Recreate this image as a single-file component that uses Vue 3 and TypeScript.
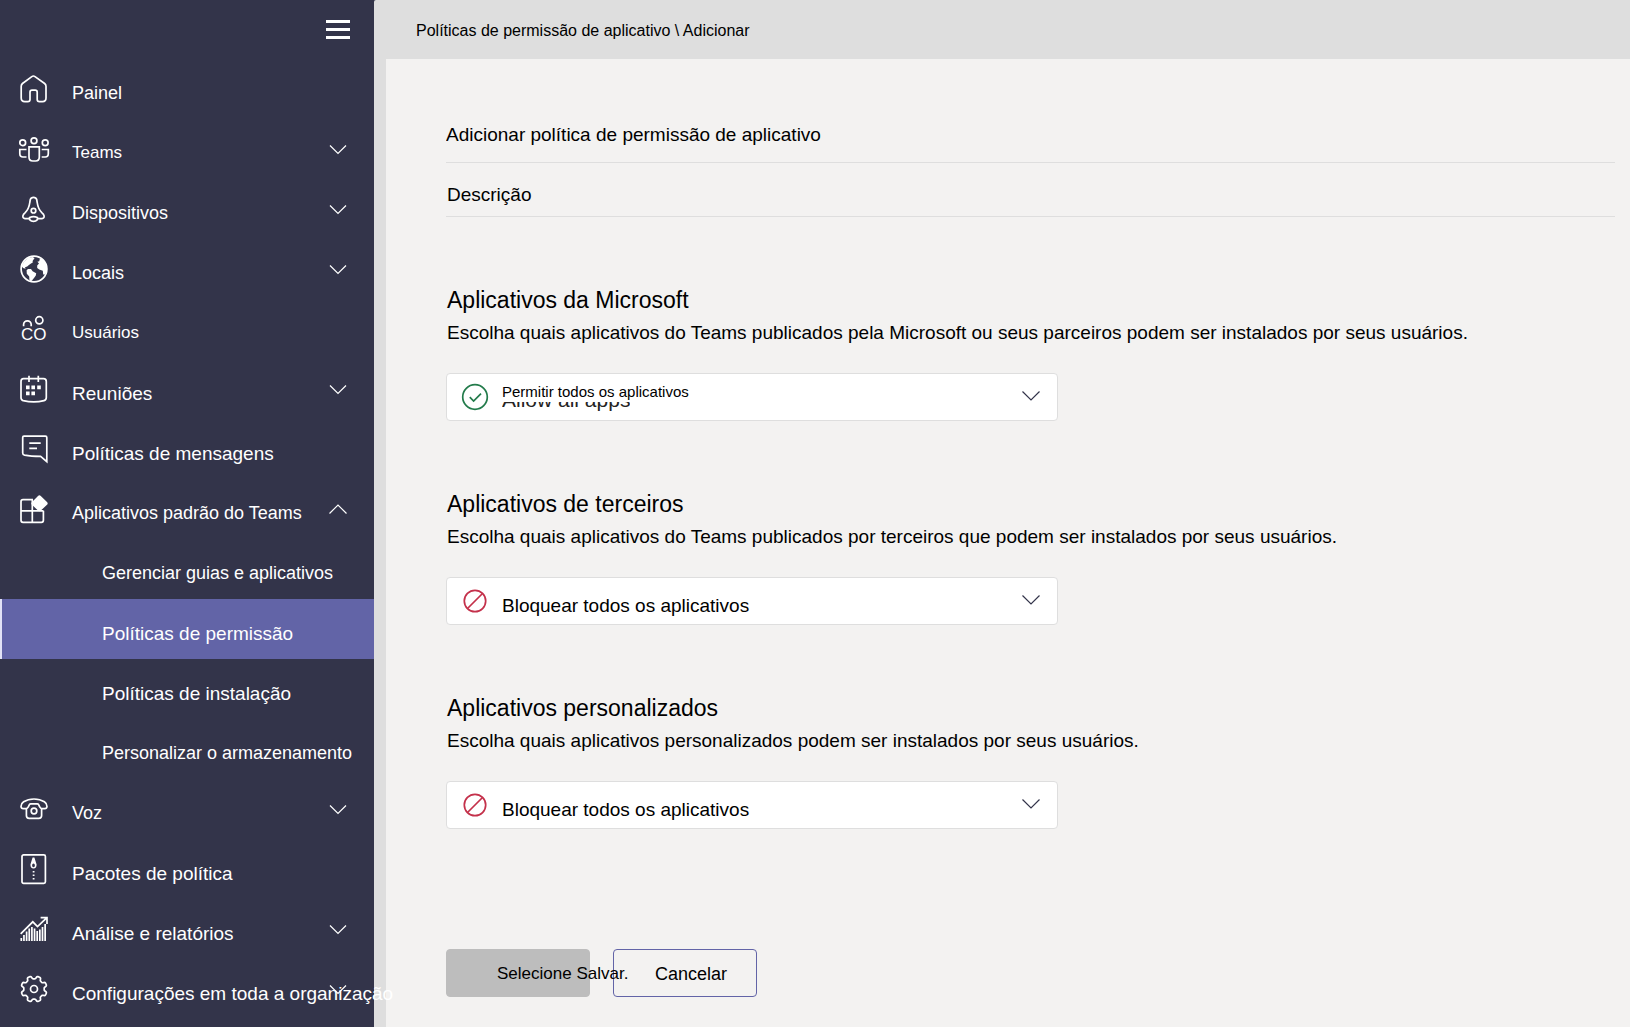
<script setup lang="ts">
import { ref } from 'vue'

interface NavItem {
  label: string
  icon?: string
  size: 's17' | 's18' | 's19'
  toggle?: 'down' | 'up'
  active?: boolean
}

interface Section {
  id: string
  title: string
  text: string
  value: string
  state: 'allow' | 'block'
}

const items: NavItem[] = [
  { label: 'Painel', icon: 'home', size: 's18' },
  { label: 'Teams', icon: 'teams', size: 's17', toggle: 'down' },
  { label: 'Dispositivos', icon: 'devices', size: 's18', toggle: 'down' },
  { label: 'Locais', icon: 'globe', size: 's18', toggle: 'down' },
  { label: 'Usuários', icon: 'users', size: 's17' },
  { label: 'Reuniões', icon: 'calendar', size: 's19', toggle: 'down' },
  { label: 'Políticas de mensagens', icon: 'message', size: 's19' },
  { label: 'Aplicativos padrão do Teams', icon: 'apps', size: 's18', toggle: 'up' },
  { label: 'Gerenciar guias e aplicativos', size: 's18' },
  { label: 'Políticas de permissão', size: 's19', active: true },
  { label: 'Políticas de instalação', size: 's19' },
  { label: 'Personalizar o armazenamento', size: 's18' },
  { label: 'Voz', icon: 'phone', size: 's18', toggle: 'down' },
  { label: 'Pacotes de política', icon: 'package', size: 's19' },
  { label: 'Análise e relatórios', icon: 'chart', size: 's19', toggle: 'down' },
  { label: 'Configurações em toda a organização', icon: 'gear', size: 's19', toggle: 'down' },
]

const sections = ref<Section[]>([
  {
    id: 'microsoft',
    title: 'Aplicativos da Microsoft',
    text: 'Escolha quais aplicativos do Teams publicados pela Microsoft ou seus parceiros podem ser instalados por seus usuários.',
    value: 'Permitir todos os aplicativos',
    state: 'allow',
  },
  {
    id: 'terceiros',
    title: 'Aplicativos de terceiros',
    text: 'Escolha quais aplicativos do Teams publicados por terceiros que podem ser instalados por seus usuários.',
    value: 'Bloquear todos os aplicativos',
    state: 'block',
  },
  {
    id: 'personalizados',
    title: 'Aplicativos personalizados',
    text: 'Escolha quais aplicativos personalizados podem ser instalados por seus usuários.',
    value: 'Bloquear todos os aplicativos',
    state: 'block',
  },
])

const name = ref('')
const description = ref('')

// Eight rounded teeth around the centre of a 32px box.
const gearPath = (() => {
  const pts: string[] = []
  for (let i = 0; i < 160; i++) {
    const a = (i / 160) * Math.PI * 2
    const r = 11.6 + 1.4 * Math.tanh(2.6 * Math.cos(8 * a - Math.PI))
    pts.push(`${(16 + r * Math.cos(a)).toFixed(2)} ${(16 + r * Math.sin(a)).toFixed(2)}`)
  }
  return `M${pts.join('L')}Z`
})()

const barTops = [25, 22, 18.5, 15.5, 14, 15.5, 18, 16.5, 14, 11]
const barsPath = barTops.map((top, i) => `M${3.3 + i * 2.65} 28V${top}`).join('')
</script>

<template>
  <div class="page">
    <aside class="sidebar">
      <div class="menu-bar">
        <button class="menu-button" type="button" aria-label="Menu">
          <span></span><span></span><span></span>
        </button>
      </div>
      <nav>
        <a
          v-for="item in items"
          :key="item.label"
          href="#"
          class="nav-row"
          :class="{ sub: !item.icon, active: item.active }"
        >
          <svg v-if="item.icon" class="nav-icon" viewBox="0 0 32 32" aria-hidden="true">
            <path
              v-if="item.icon === 'home'"
              d="M3.2 13.2Q3.2 11.6 4.5 10.5L13.8 3.6Q15.4 2.4 17 3.6L26.6 10.5Q28 11.6 28 13.2V25Q28 28.6 24.5 28.6H21.5Q19.2 28.6 19.2 26.5V19.2Q19.2 17.2 17.2 17.2H14Q12 17.2 12 19.2V26.5Q12 28.6 9.8 28.6H6.8Q3.2 28.6 3.2 25Z"
            />
            <g v-else-if="item.icon === 'teams'">
              <circle cx="4.7" cy="9.7" r="2.9" />
              <circle cx="16" cy="7.7" r="2.9" />
              <circle cx="27.2" cy="9.7" r="2.9" />
              <path d="M11 13.8H21.3V24Q21.3 28 17.5 28H14.8Q11 28 11 24Z" />
              <path d="M8.5 16.5H1.8V20.5Q1.8 24 5 24H8.5M23.7 16.5H30.3V20.5Q30.3 24 27.2 24H23.7" />
            </g>
            <g v-else-if="item.icon === 'devices'">
              <path d="M11.6 25.6H7Q4.6 25.4 4.9 22.8Q5.2 21.3 7.2 19.6Q10.9 16 11.8 9.5L12.3 6.5Q13 4.4 15.5 4.4T18.7 6.5L19.2 9.5Q20.1 16 23.8 19.6Q25.8 21.3 26.1 22.8Q26.4 25.4 24 25.6H19.4" />
              <circle cx="15.5" cy="17.7" r="2.3" />
              <path d="M11.6 24.5Q15.5 22.8 19.4 24.5V26.6Q17.8 28.4 15.5 28.4T11.6 26.6Z" />
            </g>
            <g v-else-if="item.icon === 'globe'">
              <circle cx="16" cy="16" r="12.9" />
              <path class="solid" d="M3.6 13L6 8.8L10 5L14.5 4L16.6 5L14.6 8L14.8 9.4L13 10.4L10.6 12.2L9.2 13.6L7 14.2L7.6 15.8L5 15ZM8.6 17.2L10 16L13 16L14.6 18.2L18.2 20.2L17.8 22.4L16.4 24.6L14 27.6L12.6 28.6L11.4 26.8L11.2 23.4L8.8 20.8ZM19.4 8.8L21.2 8.2L21.8 6L24 5.6L27 9L28.8 13.6L28.8 17.6L27.2 21.4L25.2 21.4L24.8 17.8L21.2 16.6L19.2 15L19.2 12.4L21 10.6Z" />
            </g>
            <g v-else-if="item.icon === 'users'">
              <circle cx="21.3" cy="7.3" r="3.6" />
              <path d="M5.6 13.2V11.6A3.8 3.8 0 0 1 13.2 11.6V13.2" />
              <text x="3" y="27">CO</text>
            </g>
            <g v-else-if="item.icon === 'calendar'">
              <path d="M5.5 5.6H25.5Q28.3 5.6 28.3 8.4V24.5Q28.3 27 26 27.6Q16 30 5.2 27.6Q3 27 3 24.5V8.4Q3 5.6 5.5 5.6ZM11 2.7V9M20.3 2.7V9" />
              <path class="solid" d="M8 12.6h3.6v3.6H8zM13.4 12.6H17v3.6H13.4zM19.2 12.6h3.6v3.6H19.2zM8 18.6h3.6v3.6H8zM13.4 18.6H17v3.6H13.4z" />
            </g>
            <path
              v-else-if="item.icon === 'message'"
              d="M6 3.2H27.4Q28.8 3.2 28.8 4.6V28.6L22.6 23.4Q13 23.4 6.6 22.2Q4.7 21.8 4.7 20V4.6Q4.7 3.2 6 3.2ZM11.3 10.2H22.7M11.3 15.3H19"
            />
            <g v-else-if="item.icon === 'apps'">
              <path d="M15 6.7H5Q3 6.7 3 8.7V27.3Q3 29.3 5 29.3H23.4Q25.4 29.3 25.4 27.3V17.8M3 17.8H25.4M14.3 6.7V29.3" />
              <path class="solid" d="M20 3Q21.4 1.6 22.8 3L29 9Q30.4 10.4 29 11.8L22.8 17.6Q21.4 19 20 17.6L14 11.8Q12.6 10.4 14 9Z" />
            </g>
            <g v-else-if="item.icon === 'phone'">
              <path d="M3 13.5Q3 10.5 5.6 8.8Q10 6 16 6T26.4 8.8Q29 10.5 29 13.5Q28.8 15.6 26.8 15.6H24Q22.4 15.6 21.8 14L20.6 11.6Q20.2 10.8 19.2 10.8H12.8Q11.8 10.8 11.4 11.6L10.2 14Q9.6 15.6 8 15.6H5.2Q3.2 15.6 3 13.5Z" />
              <path d="M8.4 15.8V22.6Q8.4 25.4 11.2 25.4H20.8Q23.6 25.4 23.6 22.6V15.8" />
              <circle cx="16" cy="18" r="2.8" />
            </g>
            <g v-else-if="item.icon === 'package'">
              <rect x="4" y="1.8" width="23.4" height="28.6" rx="1.6" />
              <path class="solid" fill-rule="evenodd" d="M14.6 4.6H16.4L18.6 11.6Q18.6 15.6 15.5 15.6T12.4 11.6ZM15.5 10.6A1.4 1.8 0 1 0 15.5 14.2A1.4 1.8 0 1 0 15.5 10.6Z" />
              <path class="solid" d="M14.7 18h1.8v1.4h-1.8zM14.7 21.6h1.8V23h-1.8zM14.7 25h1.8v1.4h-1.8z" />
            </g>
            <g v-else-if="item.icon === 'chart'">
              <path d="M2.7 20.8L14.8 8.8L19.5 13.6L28.4 5.2M22.6 4.7H29V11" />
              <path :d="barsPath" />
            </g>
            <g v-else>
              <path :d="gearPath" />
              <circle cx="16" cy="16" r="3.5" />
            </g>
          </svg>
          <span class="nav-label" :class="item.size">{{ item.label }}</span>
          <svg v-if="item.toggle" class="chevron" viewBox="0 0 20 12" aria-hidden="true">
            <path :d="item.toggle === 'down' ? 'M2 1.5L10 9.5L18 1.5' : 'M1.5 9.5L10 1L18.5 9.5'" />
          </svg>
        </a>
      </nav>
    </aside>

    <div class="workspace">
      <header class="topbar">Políticas de permissão de aplicativo \ Adicionar</header>
      <main class="content">
        <input
          v-model="name"
          class="field name"
          type="text"
          aria-label="Nome da política"
          placeholder="Adicionar política de permissão de aplicativo"
        />
        <input
          v-model="description"
          class="field description"
          type="text"
          aria-label="Descrição da política"
          placeholder="Descrição"
        />

        <section v-for="section in sections" :key="section.id" class="section">
          <h2>{{ section.title }}</h2>
          <label :for="section.id">{{ section.text }}</label>
          <div class="select-box">
            <select :id="section.id" :class="section.state">
              <option>{{ section.value }}</option>
            </select>
            <svg v-if="section.state === 'allow'" class="state-icon ok" viewBox="0 0 28 28" aria-hidden="true">
              <circle cx="14" cy="14" r="12.3" />
              <path d="M8.8 14.2L12.6 18L20 10.6" />
            </svg>
            <svg v-else class="state-icon no" viewBox="0 0 28 28" aria-hidden="true">
              <circle cx="14" cy="14" r="10.7" />
              <path d="M6.5 21.5L21.5 6.5" />
            </svg>
            <span v-if="section.state === 'allow'" class="under-text" aria-hidden="true">Allow all apps</span>
            <svg class="chevron dark" viewBox="0 0 20 12" aria-hidden="true">
              <path d="M1.5 1.5L10 10L18.5 1.5" />
            </svg>
          </div>
        </section>

        <div class="actions">
          <button class="save" type="button" disabled>Selecione Salvar.</button>
          <button class="cancel" type="button">Cancelar</button>
        </div>
      </main>
    </div>
  </div>
</template>

<style>
body {
  margin: 0;
  background: #f3f2f1;
}
</style>

<style scoped>
.page {
  display: flex;
  min-height: 100vh;
  background: #33344a;
  color: #000;
  font-family: "Liberation Sans", Arial, sans-serif;
}

.sidebar {
  position: relative;
  z-index: 1;
  flex: none;
  width: 374px;
}

.menu-bar {
  display: flex;
  justify-content: flex-end;
  height: 59px;
  padding-right: 24px;
  box-sizing: border-box;
}

.menu-button {
  display: flex;
  flex-direction: column;
  justify-content: center;
  gap: 5px;
  width: 24px;
  height: 58px;
  padding: 0;
  border: 0;
  background: none;
}

.menu-button span {
  height: 3px;
  background: #fff;
}

.nav-row {
  display: flex;
  align-items: center;
  height: 60px;
  padding: 0 26px 0 18px;
  box-sizing: border-box;
  color: #fff;
  text-decoration: none;
}

.nav-row.sub {
  padding-left: 102px;
}

.nav-row.active {
  padding-left: 100px;
  border-left: 2px solid #e2e2f6;
  background: #6264a7;
}

.nav-icon {
  flex: none;
  width: 32px;
  height: 32px;
  margin-right: 22px;
  fill: none;
  stroke: #fff;
  stroke-width: 1.7;
}

.nav-icon .solid {
  fill: #fff;
  stroke: none;
}

.nav-icon text {
  fill: #fff;
  stroke: none;
  font-size: 17px;
}

.nav-label {
  flex: 1;
  min-width: 0;
  padding-top: 8px;
  line-height: 24px;
  white-space: nowrap;
}

.s17 { font-size: 17px; }
.s18 { font-size: 18px; }

.s19 {
  padding-top: 10px;
  font-size: 19px;
}

.chevron {
  flex: none;
  width: 20px;
  height: 12px;
  padding-top: 2px;
  fill: none;
  stroke: #fff;
  stroke-width: 1.2;
}

.workspace {
  flex: 1;
  min-width: 0;
  padding-left: 12px;
  border-top-left-radius: 2px;
  background: #dedede;
  display: flex;
  flex-direction: column;
}

.topbar {
  height: 59px;
  padding: 0 30px;
  font-size: 16px;
  line-height: 62px;
}

.content {
  flex: 1;
  padding: 48px 15px 30px 60px;
  background: #f3f2f1;
}

.field {
  display: block;
  width: 100%;
  box-sizing: border-box;
  padding: 0;
  border: 0;
  border-bottom: 1px solid #dedede;
  border-radius: 0;
  outline: 0;
  background: none;
  color: #000;
  font-family: inherit;
  font-size: 19px;
}

.field::placeholder {
  color: #000;
  opacity: 1;
}

.name {
  height: 56px;
}

.description {
  height: 44px;
  margin-top: 10px;
  padding-left: 1px;
}

.section {
  margin-top: 67px;
}

h2 {
  margin: 0;
  padding-left: 1px;
  font-size: 23px;
  font-weight: 400;
  line-height: 32px;
}

label {
  display: block;
  padding-left: 1px;
  font-size: 19px;
  line-height: 34px;
}

.select-box {
  position: relative;
  width: 612px;
  max-width: 100%;
  margin-top: 23px;
}

select {
  display: block;
  width: 100%;
  height: 48px;
  box-sizing: border-box;
  padding: 8px 54px 0 55px;
  border: 1px solid #dedede;
  border-radius: 4px;
  appearance: none;
  background: #fff;
  color: #000;
  font-family: inherit;
  font-size: 19px;
}

select.allow {
  padding: 0 54px 12px 55px;
  font-size: 15px;
}

.state-icon {
  position: absolute;
  top: 10px;
  left: 15px;
  width: 28px;
  height: 28px;
  fill: none;
  stroke-width: 1.7;
  pointer-events: none;
}

.ok { stroke: #237b4b; }
.no { stroke: #c4314b; }

.under-text {
  position: absolute;
  top: 29px;
  left: 56px;
  display: flex;
  align-items: flex-end;
  height: 11px;
  overflow: hidden;
  color: #252423;
  font-size: 21px;
  line-height: 26px;
  white-space: nowrap;
  pointer-events: none;
}

.dark {
  position: absolute;
  top: 15px;
  right: 17px;
  stroke: #33344a;
  pointer-events: none;
}

.actions {
  display: flex;
  gap: 23px;
  margin-top: 120px;
}

.actions button {
  width: 144px;
  height: 48px;
  box-sizing: border-box;
  border: 1px solid #6264a7;
  border-radius: 4px;
  background: none;
  color: #000;
  font-family: inherit;
  text-align: left;
  white-space: nowrap;
}

.actions .save {
  position: relative;
  z-index: 1;
  padding: 2px 0 0 50px;
  border-color: #bdbdbd;
  background: #bdbdbd;
  font-size: 17px;
}

.actions .cancel {
  padding: 2px 0 0 41px;
  font-size: 18px;
}
</style>
